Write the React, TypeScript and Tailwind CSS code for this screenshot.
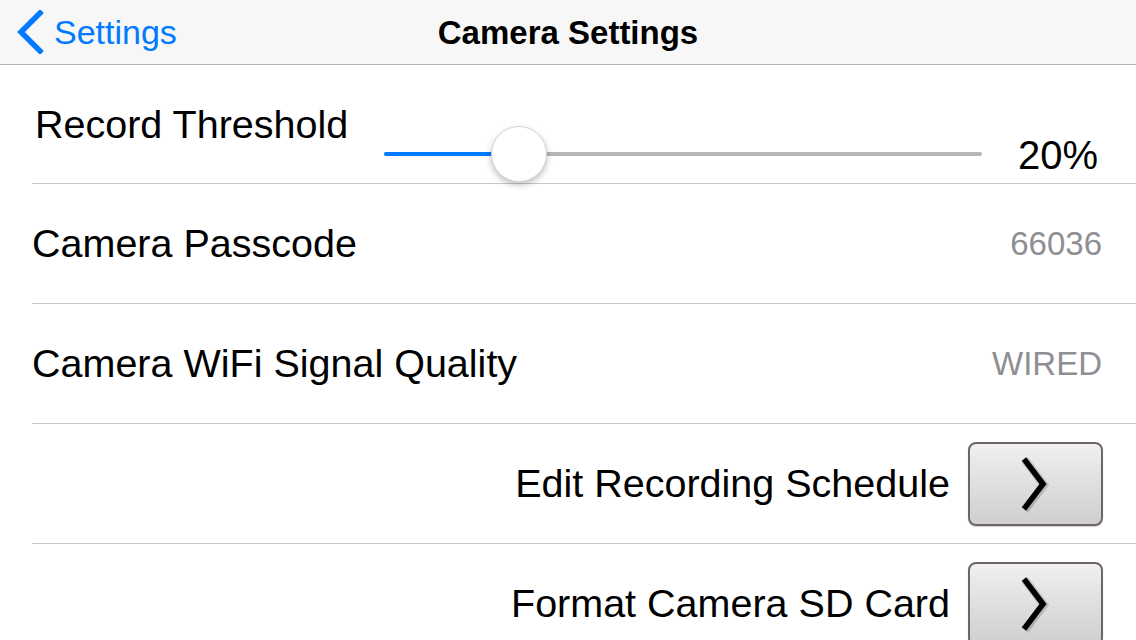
import React from "react";

const font = { fontFamily: '"Helvetica Neue", "Liberation Sans", Arial, sans-serif' };

function ChevButton() {
  return (
    <div className="w-[135px] h-[84px] shrink-0 rounded-[8px] border-2 border-[#6f6468] bg-gradient-to-b from-[#f0f0f0] to-[#cfcfcf] flex items-center justify-center shadow-[0_1px_1px_rgba(0,0,0,0.2)]">
      <svg width="34" height="62" viewBox="0 0 34 62" className="ml-[-3px]">
        <path d="M8 7 L27 32 L8 57" fill="none" stroke="rgba(0,0,0,0.18)" strokeWidth="8" strokeLinecap="butt" strokeLinejoin="miter" />
        <path d="M7 6 L26 31 L7 56" fill="none" stroke="#000" strokeWidth="5.5" strokeLinecap="butt" strokeLinejoin="miter" />
      </svg>
    </div>
  );
}

export default function App() {
  return (
    <div className="w-[1136px] h-[640px] overflow-hidden bg-white flex flex-col" style={font}>
      <div className="h-[65px] shrink-0 bg-[#f7f7f7] border-b border-[#b2b2b2] relative flex items-center">
        <div className="flex items-center pl-[15px] text-[#007aff]">
          <svg width="30" height="44" viewBox="0 0 30 44">
            <path d="M25 3 L6 22 L25 41" fill="none" stroke="#007aff" strokeWidth="5.5" strokeLinecap="square" />
          </svg>
          <span className="ml-[9px] text-[34px] leading-none">Settings</span>
        </div>
        <div className="absolute inset-0 flex items-center justify-center pointer-events-none">
          <span className="text-[33px] font-semibold text-black leading-none">Camera Settings</span>
        </div>
      </div>

      <div className="flex flex-col pl-[32px]">
        <div className="h-[119px] border-b border-[#c8c7cc] relative pr-[38px]">
          <div className="absolute left-[3px] top-[40px] text-[39.5px] leading-none text-black">Record Threshold</div>
          <div className="absolute left-[352px] right-[154px] top-[87px] h-[4px] bg-[#b7b7b7] rounded-full">
            <div className="absolute left-0 top-0 h-[4px] w-[115px] bg-[#007aff] rounded-full" />
            <div className="absolute left-[107px] top-[-26px] w-[56px] h-[56px] rounded-full bg-white border border-[#d4d4d4] shadow-[0_3px_6px_rgba(0,0,0,0.25)]" />
          </div>
          <div className="absolute right-[38px] top-[70px] text-[40px] leading-none text-black">20%</div>
        </div>

        <div className="h-[120px] border-b border-[#c8c7cc] flex items-center justify-between pr-[34px]">
          <span className="text-[39.5px] text-black leading-none">Camera Passcode</span>
          <span className="text-[33px] text-[#8e8e93] leading-none">66036</span>
        </div>

        <div className="h-[120px] border-b border-[#c8c7cc] flex items-center justify-between pr-[34px]">
          <span className="text-[39.5px] text-black leading-none">Camera WiFi Signal Quality</span>
          <span className="text-[33px] text-[#8e8e93] leading-none">WIRED</span>
        </div>

        <div className="h-[120px] border-b border-[#c8c7cc] flex items-center justify-end pr-[33px] gap-[18px]">
          <span className="text-[39.5px] text-black leading-none">Edit Recording Schedule</span>
          <ChevButton />
        </div>

        <div className="h-[120px] flex items-center justify-end pr-[33px] gap-[18px]">
          <span className="text-[39.5px] text-black leading-none">Format Camera SD Card</span>
          <ChevButton />
        </div>
      </div>
    </div>
  );
}
